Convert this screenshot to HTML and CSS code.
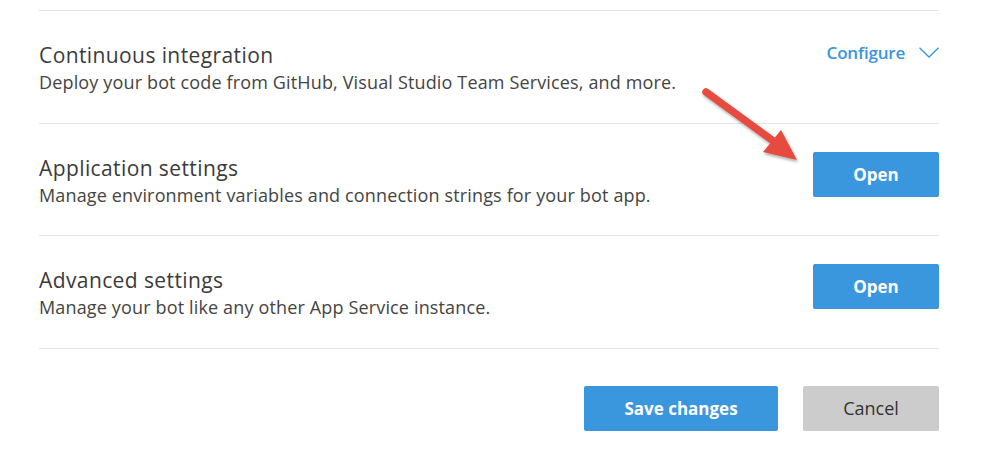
FILE: index.html
```html
<!DOCTYPE html>
<html>
<head>
<meta charset="utf-8">
<link rel="stylesheet" href="styles.css">
</head>
<body>
<div class="panel">
  <div class="row">
    <div class="text">
      <div class="title">Continuous integration</div>
      <div class="desc">Deploy your bot code from GitHub, Visual Studio Team Services, and more.</div>
    </div>
    <a class="configure">Configure
      <svg class="chev" width="20" height="11" viewBox="0 0 20 11"><path d="M0.5 0.8 L10 10 L19.5 0.8" fill="none" stroke="#3a96dd" stroke-width="1.3"/></svg>
    </a>
  </div>
  <div class="row">
    <div class="text">
      <div class="title">Application settings</div>
      <div class="desc">Manage environment variables and connection strings for your bot app.</div>
    </div>
    <button class="btn primary open">Open</button>
  </div>
  <div class="row">
    <div class="text">
      <div class="title">Advanced settings</div>
      <div class="desc">Manage your bot like any other App Service instance.</div>
    </div>
    <button class="btn primary open">Open</button>
  </div>
  <div class="footer">
    <button class="btn primary save">Save changes</button>
    <button class="btn cancel">Cancel</button>
  </div>
</div>
<svg class="arrow" width="1008" height="460" viewBox="0 0 1008 460">
  <defs>
    <filter id="sh" x="-20%" y="-20%" width="140%" height="140%">
      <feDropShadow dx="1" dy="2" stdDeviation="1.5" flood-color="#000" flood-opacity="0.35"/>
    </filter>
  </defs>
  <g filter="url(#sh)">
    <line x1="706" y1="92" x2="776" y2="143" stroke="#e64b41" stroke-width="7.5" stroke-linecap="round"/>
    <polygon points="797,160 763,152 781,130" fill="#e64b41"/>
  </g>
</svg>
</body>
</html>
```

FILE: styles.css
```css
html, body {
  margin: 0;
  padding: 0;
  background: #fff;
}
body {
  font-family: "Open Sans", "Noto Sans", sans-serif;
  color: #333;
  width: 1008px;
  height: 460px;
  overflow: hidden;
  position: relative;
}
.panel {
  width: 900px;
  margin-left: 39px;
  padding-top: 10px;
}
.row {
  border-top: 1px solid #e3e3e3;
  display: flex;
  justify-content: space-between;
  align-items: flex-start;
  height: 111.6px;
}
.text {
  padding-top: 31px;
}
.title {
  font-size: 21px;
  line-height: 27px;
  color: #3b3b3b;
  letter-spacing: 0.4px;
}
.desc {
  font-size: 18px;
  line-height: 27px;
  color: #444;
  letter-spacing: 0.15px;
}
.configure {
  margin-top: 30px;
  display: flex;
  align-items: center;
  gap: 14px;
  color: #3a96dd;
  font-size: 17px;
  font-weight: 600;
  letter-spacing: -0.2px;
  cursor: pointer;
}
.chev {
  display: block;
  margin-top: 0;
}
.btn {
  border: none;
  border-radius: 2px;
  height: 45px;
  font-family: "Open Sans", "Noto Sans", sans-serif;
  font-size: 17px;
  padding: 0;
  cursor: pointer;
}
.primary {
  background: #3a96dd;
  color: #fff;
  font-weight: 700;
}
.open {
  width: 126px;
  margin-top: 28px;
}
.footer {
  border-top: 1px solid #e3e3e3;
  display: flex;
  justify-content: flex-end;
  gap: 25px;
  padding-top: 37px;
}
.save {
  width: 194px;
}
.cancel {
  width: 136px;
  background: #cccccc;
  color: #333;
  font-size: 18px;
}
.arrow {
  position: absolute;
  left: 0;
  top: 0;
  pointer-events: none;
}
```
